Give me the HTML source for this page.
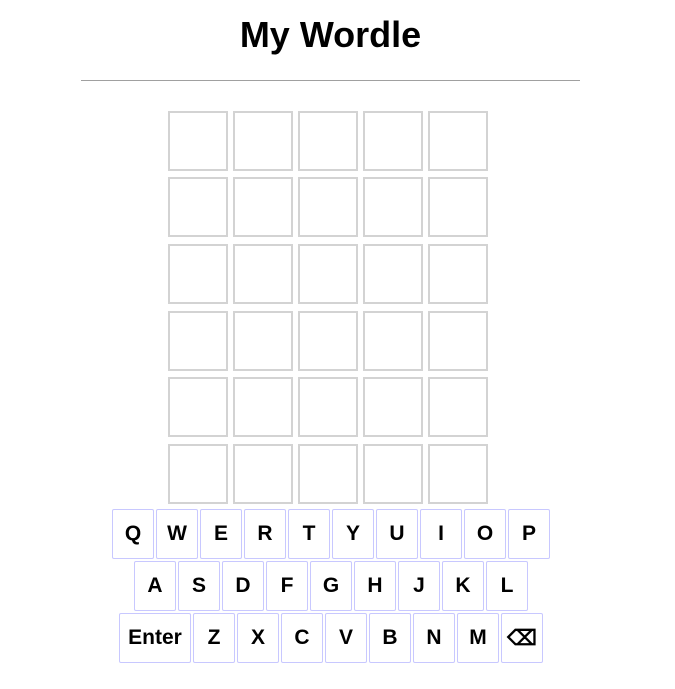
<!DOCTYPE html>
<html><head><style>
body{margin:0;width:675px;height:689px;background:#fff;font-family:"Liberation Sans",sans-serif;position:relative;overflow:hidden}
h1{position:absolute;left:0;width:661px;top:14px;margin:0;text-align:center;font-size:36px;font-weight:bold;color:#000;line-height:42px}
.hr{position:absolute;left:81px;top:80px;width:499px;height:1px;background:#a0a0a0}
.t{position:absolute;width:56px;height:56px;border:2px solid #d3d3d3;box-sizing:content-box}
.k{position:absolute;height:48px;border:1px solid #c8c8ff;border-radius:2px;display:flex;align-items:center;justify-content:center;font-weight:bold;font-size:21px;color:#000;box-sizing:content-box}
</style></head><body>
<h1>My Wordle</h1>
<div class="hr"></div>
<div id="g"></div>
<div id="kb"></div>
<script>
var g=document.getElementById('g'),ys=[111,177,244,311,377,444],h='';
ys.forEach(function(y){for(var i=0;i<5;i++)h+='<div class="t" style="left:'+(168+65*i)+'px;top:'+y+'px"></div>';});
g.innerHTML=h;
var k='';
function key(x,y,w,t){k+='<div class="k" style="left:'+x+'px;top:'+y+'px;width:'+(w-2)+'px">'+t+'</div>';}
'QWERTYUIOP'.split('').forEach(function(c,i){key(112+44*i,509,42,c)});
'ASDFGHJKL'.split('').forEach(function(c,i){key(134+44*i,561,42,c)});
key(119,613,72,'Enter');
'ZXCVBNM'.split('').forEach(function(c,i){key(193+44*i,613,42,c)});
key(501,613,42,'⌫');
document.getElementById('kb').innerHTML=k;
</script>
</body></html>
